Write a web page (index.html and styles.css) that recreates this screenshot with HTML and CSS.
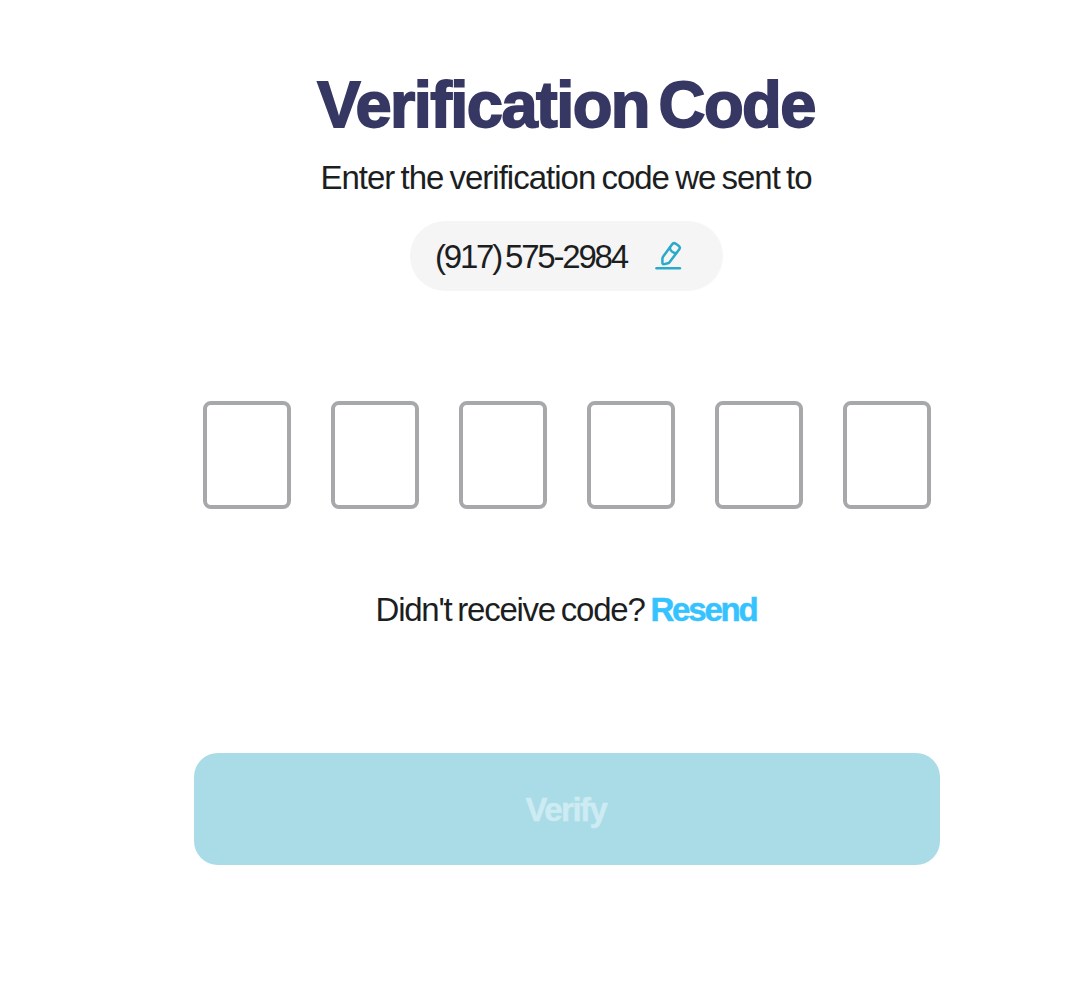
FILE: index.html
```html
<!DOCTYPE html>
<html lang="en">
<head>
    <meta charset="UTF-8">
    <meta name="viewport" content="width=device-width, initial-scale=1.0">
    <title>Verification Code</title>
    <link rel="stylesheet" href="styles.css">
</head>
<body>
    <form class="container">
        <h1>Verification Code</h1>
        <p class="subtitle">Enter the verification code we sent to</p>

        <div class="phone">
            <span class="phone-number">(917) 575-2984</span>
            <button type="button" class="edit" aria-label="Edit phone number">
                <svg width="28" height="30" viewBox="0 0 28 30" fill="none" stroke="#2aa9c9" stroke-width="2.5" stroke-linecap="round" stroke-linejoin="round">
                    <path d="M17 3.4c1-1.4 2.5-1.6 3.8-.7l2.8 2.1c1.3 1 1.5 2.5.5 3.8L14.7 20.9c-.5.7-1.1 1.1-1.9 1.3l-3.4.9c-1.2.3-2-.2-2-1.4v-3.9c0-.8.3-1.6.8-2.2z"/>
                    <path d="M14.9 6.8c0 2.6 2.7 4.9 6.3 5.4"/>
                    <path d="M1.5 27.3h23.4"/>
                </svg>
            </button>
        </div>

        <div class="code">
            <input type="text" maxlength="1" inputmode="numeric" aria-label="Digit 1">
            <input type="text" maxlength="1" inputmode="numeric" aria-label="Digit 2">
            <input type="text" maxlength="1" inputmode="numeric" aria-label="Digit 3">
            <input type="text" maxlength="1" inputmode="numeric" aria-label="Digit 4">
            <input type="text" maxlength="1" inputmode="numeric" aria-label="Digit 5">
            <input type="text" maxlength="1" inputmode="numeric" aria-label="Digit 6">
        </div>

        <p class="resend"><span class="question">Didn't receive code?</span> <a href="#" class="resend-link">Resend</a></p>

        <button type="submit" class="btn" disabled>Verify</button>
    </form>
</body>
</html>
```
FILE: styles.css
```css
* { box-sizing: border-box; }
body {
    font-family: "Liberation Sans", Arial, sans-serif;
    font-size: 33px;
    line-height: 40px;
    color: #1c1e1f;
    background: #fff;
    margin: 0;
}
.container {
    display: flex;
    flex-direction: column;
    align-items: center;
    width: 746px;
    margin: 0 0 0 194px;
    padding-top: 65px;
}
h1 {
    margin: 0 2px 0 0;
    color: #373764;
    font-size: 65px;
    font-weight: 700;
    line-height: 80px;
    letter-spacing: -1.55px;
    word-spacing: -7px;
    white-space: nowrap;
    -webkit-text-stroke: 1.8px #373764;
}
.subtitle { margin: 13px 2px 0 0; letter-spacing: -1px; word-spacing: -2px; white-space: nowrap; }
.phone {
    display: flex;
    align-items: center;
    width: 313px;
    height: 70px;
    margin: 23px 1px 0 0;
    padding-left: 25px;
    background: #f5f5f5;
    border-radius: 35px;
}
.phone-number { width: 193px; padding-top: 2px; letter-spacing: -2.2px; word-spacing: -3px; white-space: nowrap; }
.edit { display: flex; margin-left: 27px; padding: 0; background: none; border: none; cursor: pointer; }
.code { display: flex; gap: 40px; margin-top: 110px; }
.code input {
    width: 88px;
    height: 108px;
    padding: 0;
    border: 4px solid #a7a8a9;
    border-radius: 8px;
    background: #fff;
    font: inherit;
    text-align: center;
}
.resend { margin: 81px 2px 0 0; white-space: nowrap; letter-spacing: -1.25px; word-spacing: -2px; }
.resend-link {
    color: #35c3ff;
    font-weight: 700;
    letter-spacing: -2.2px;
    text-decoration: none;
    -webkit-text-stroke: 0.5px #35c3ff;
}
.btn {
    width: 100%;
    height: 112px;
    margin-top: 123px;
    padding: 2px 2px 0 0;
    border: none;
    border-radius: 24px;
    background: #aadce7;
    color: #cdebf2;
    font: inherit;
    font-weight: 700;
    letter-spacing: -1.5px;
    -webkit-text-stroke: 0.5px #cdebf2;
}
```
